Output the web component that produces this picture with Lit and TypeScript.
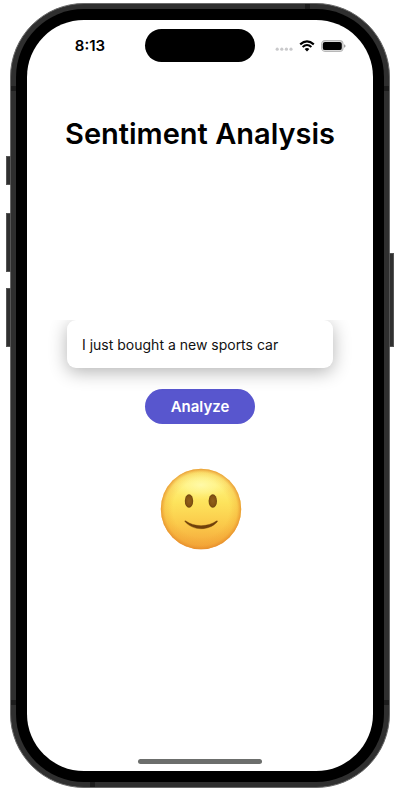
import { LitElement, html, css } from "lit";
import { customElement, state } from "lit/decorators.js";

@customElement("status-bar")
class StatusBar extends LitElement {
  static styles = css`
    :host {
      display: grid;
      grid-template-columns: 1fr 110px 1fr;
      align-items: center;
      height: 33px;
      margin-top: 9px;
    }
    .time {
      padding-left: 8px;
      text-align: center;
      font-size: 15px;
      line-height: 20px;
      font-weight: 600;
    }
    .island {
      height: 33px;
      border-radius: 17px;
      background: #000;
    }
    .icons {
      display: flex;
      align-items: center;
      gap: 6px;
      padding-left: 20px;
    }
    svg {
      display: block;
      flex: none;
    }
  `;

  render() {
    return html`
      <div class="time">8:13</div>
      <div class="island"></div>
      <div class="icons">
        <svg width="18" height="12" viewBox="0 0 18 12" fill="#c9c9cb">
          <circle cx="2.2" cy="9.2" r="1.6" />
          <circle cx="6.8" cy="9.2" r="1.6" />
          <circle cx="11.4" cy="9.2" r="1.6" />
          <circle cx="16" cy="9.2" r="1.6" />
        </svg>
        <svg width="16" height="12" viewBox="0 0 16 12" fill="none" stroke="#000">
          <path d="M1.2 4.4Q8-1.7 14.8 4.4" stroke-width="2.1" />
          <path d="M3.6 7Q8 3.1 12.4 7" stroke-width="2" />
          <path d="M8 11.4 5.6 9Q8 7.1 10.4 9Z" fill="#000" stroke="none" />
        </svg>
        <svg width="25" height="12" viewBox="0 0 25 12">
          <rect x="0.6" y="0.6" width="21.4" height="10.8" rx="3.4" fill="#e4e4e4" stroke="#b8b8b8" stroke-width="1.1" />
          <rect x="1.8" y="1.9" width="19" height="8.2" rx="2.2" fill="#000" />
          <path d="M23 4.2Q24.6 4.8 24.6 6T23 7.8Z" fill="#a0a0a0" />
        </svg>
      </div>
    `;
  }
}

@customElement("smile-face")
class SmileFace extends LitElement {
  static styles = css`
    :host {
      display: block;
    }
    svg {
      display: block;
      width: 82px;
      height: 82px;
      overflow: visible;
    }
  `;

  render() {
    return html`
      <svg viewBox="-1 0 82 82" role="img" aria-label="Positive sentiment">
        <defs>
          <linearGradient id="skin" x1="0" y1="0" x2="0" y2="1">
            <stop offset="0" stop-color="#fdee78" />
            <stop offset="0.2" stop-color="#fff07a" />
            <stop offset="0.42" stop-color="#fde35c" />
            <stop offset="0.68" stop-color="#fbcb4b" />
            <stop offset="1" stop-color="#f4a53a" />
          </linearGradient>
          <radialGradient id="edge" cx="0.5" cy="0.5" r="0.5">
            <stop offset="0.7" stop-color="#ee9a2c" stop-opacity="0" />
            <stop offset="0.9" stop-color="#ee9a2c" stop-opacity="0.28" />
            <stop offset="1" stop-color="#e4892a" stop-opacity="0.8" />
          </radialGradient>
          <radialGradient id="shine">
            <stop offset="0" stop-color="#fffcb4" stop-opacity="0.8" />
            <stop offset="0.5" stop-color="#fff9a0" stop-opacity="0.5" />
            <stop offset="1" stop-color="#fff27a" stop-opacity="0" />
          </radialGradient>
          <radialGradient id="iris">
            <stop offset="0" stop-color="#90601c" />
            <stop offset="0.7" stop-color="#855312" />
            <stop offset="1" stop-color="#6d450f" />
          </radialGradient>
        </defs>
        <circle cx="41" cy="41" r="40.2" fill="url(#skin)" />
        <circle cx="41" cy="41" r="40.2" fill="url(#edge)" />
        <ellipse cx="41" cy="17" rx="30" ry="15" fill="url(#shine)" />
        <ellipse cx="29" cy="33" rx="4.2" ry="6.7" fill="url(#iris)" />
        <ellipse cx="52.8" cy="33" rx="4.2" ry="6.7" fill="url(#iris)" />
        <path
          d="M25 53.6Q24.4 52.4 25.8 53C34 59.2 48 59.2 56.4 53Q57.9 52.4 57.2 53.9C49 63 33 63 25 53.6Z"
          fill="#70400a"
          stroke="#70400a"
          stroke-width="0.4"
          stroke-linejoin="round"
        />
      </svg>
    `;
  }
}

@customElement("app-root")
class AppRoot extends LitElement {
  @state() private text = "I just bought a new sports car";

  static styles = css`
    :host {
      display: block;
      box-sizing: border-box;
      min-height: 100vh;
      padding: 3px 10px 1px;
      background: #fff;
      color: #000;
      font-family: Inter, "Liberation Sans", sans-serif;
    }
    * {
      box-sizing: border-box;
    }
    .phone {
      position: relative;
      display: flex;
      min-height: calc(100vh - 4px);
      padding: 5px;
      border: 1px solid #6b6b6b;
      border-radius: 74px;
      background: #2f2f2f;
    }
    .key {
      position: absolute;
      width: 5px;
      background: #303030;
      border: 1px solid #555;
    }
    .left {
      right: 100%;
    }
    .right {
      left: 100%;
    }
    .mute {
      top: 152px;
      height: 29px;
    }
    .louder {
      top: 209px;
      height: 59px;
    }
    .quieter {
      top: 284px;
      height: 59px;
    }
    .power {
      top: 249px;
      height: 94px;
    }
    .seam {
      position: absolute;
      width: 5px;
      height: 5px;
      background: #1c1c1c;
    }
    .seam.start {
      left: 0;
    }
    .seam.end {
      right: 0;
    }
    .seam.upper {
      top: 82px;
    }
    .seam.lower {
      bottom: 82px;
    }
    .seam.head {
      top: 0;
      right: 79px;
    }
    .seam.foot {
      bottom: 0;
      left: 79px;
    }
    .bezel {
      flex: 1;
      display: flex;
      padding: 11px;
      border-radius: 68px;
      background: #000;
    }
    .screen {
      flex: 1;
      min-width: 0;
      display: flex;
      flex-direction: column;
      border-radius: 57px;
      background: #fff;
    }
    h1 {
      margin: 52px 0 0;
      text-align: center;
      font-size: 29px;
      line-height: 40px;
      font-weight: 600;
    }
    form {
      display: flex;
      flex-direction: column;
      align-items: center;
      margin-top: 166px;
      padding: 0 40px;
    }
    .field {
      width: 100%;
      clip-path: inset(0 -40px -40px -40px);
    }
    input {
      display: block;
      width: 100%;
      height: 48px;
      padding: 0 15px;
      border: 0;
      border-radius: 9px;
      outline: none;
      background: #fff;
      box-shadow: 0 4px 18px rgba(0, 0, 0, 0.3);
      font: 400 14px/20px Inter, "Liberation Sans", sans-serif;
      color: #111;
    }
    button {
      width: 110px;
      height: 35px;
      margin-top: 21px;
      padding: 0;
      border: 0;
      border-radius: 18px;
      background: #5856ce;
      color: #fff;
      font: 600 15px/20px Inter, "Liberation Sans", sans-serif;
    }
    smile-face {
      align-self: center;
      margin-top: 44px;
    }
    .home {
      width: 124px;
      height: 5px;
      margin: auto auto 7px;
      border-radius: 3px;
      background: #6c6e6c;
    }
  `;

  private onInput(e: Event) {
    this.text = (e.target as HTMLInputElement).value;
  }

  render() {
    return html`
      <div class="phone">
        <span class="key left mute"></span>
        <span class="key left louder"></span>
        <span class="key left quieter"></span>
        <span class="key right power"></span>
        <span class="seam start upper"></span>
        <span class="seam end upper"></span>
        <span class="seam start lower"></span>
        <span class="seam end lower"></span>
        <span class="seam head"></span>
        <span class="seam foot"></span>
        <div class="bezel">
          <main class="screen">
            <status-bar></status-bar>
            <h1>Sentiment Analysis</h1>
            <form @submit=${(e: Event) => e.preventDefault()}>
              <div class="field">
                <input type="text" aria-label="Text to analyze" .value=${this.text} @input=${this.onInput} />
              </div>
              <button type="submit">Analyze</button>
            </form>
            <smile-face></smile-face>
            <div class="home"></div>
          </main>
        </div>
      </div>
    `;
  }
}
